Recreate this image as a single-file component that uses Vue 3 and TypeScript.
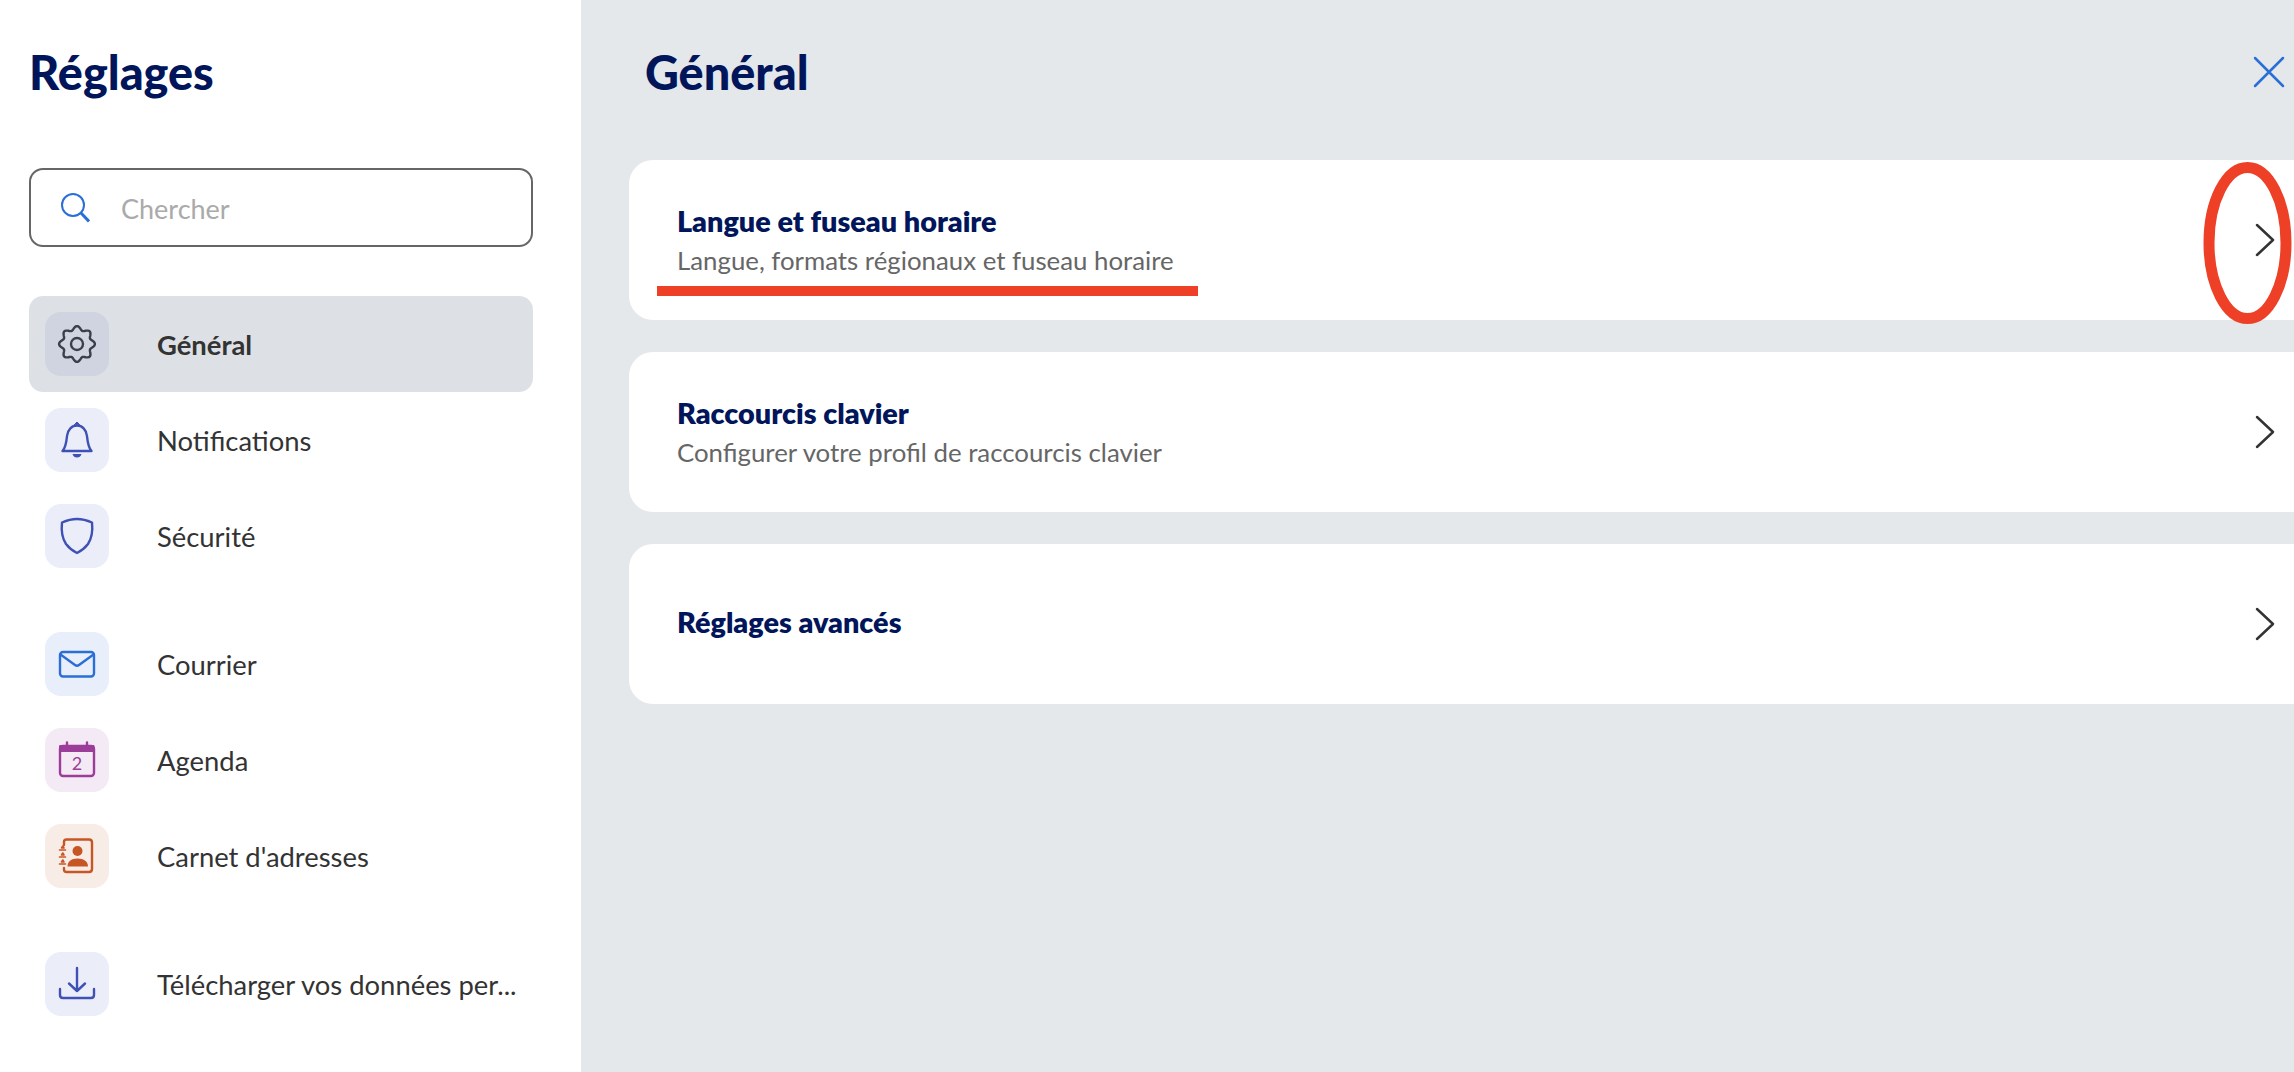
<script setup lang="ts">
interface NavItem {
  key: string;
  label: string;
  tone: string;
}

const groups: NavItem[][] = [
  [
    { key: 'gear', label: 'Général', tone: 'active' },
    { key: 'bell', label: 'Notifications', tone: 'indigo' },
    { key: 'shield', label: 'Sécurité', tone: 'indigo' }
  ],
  [
    { key: 'mail', label: 'Courrier', tone: 'blue' },
    { key: 'calendar', label: 'Agenda', tone: 'purple' },
    { key: 'contacts', label: "Carnet d'adresses", tone: 'orange' }
  ],
  [
    { key: 'download', label: 'Télécharger vos données per...', tone: 'indigo' }
  ]
]

const cards = [
  { title: 'Langue et fuseau horaire', sub: 'Langue, formats régionaux et fuseau horaire' },
  { title: 'Raccourcis clavier', sub: 'Configurer votre profil de raccourcis clavier' },
  { title: 'Réglages avancés', sub: '' }
]

// wavy gear outline, 8 lobes
const gearPath = Array.from({ length: 120 }, (_, i) => {
  const a = (i / 120) * Math.PI * 2
  const r = 16 + 1.9 * Math.cos(8 * a)
  return `${i === 0 ? 'M' : 'L'}${(20 + r * Math.sin(a)).toFixed(2)} ${(20 - r * Math.cos(a)).toFixed(2)}`
}).join(' ') + ' Z'
</script>

<template>
  <div class="page">
    <aside class="sidebar">
      <h1 class="side-title">Réglages</h1>
      <div class="search">
        <svg class="search-icon" width="30" height="30" viewBox="0 0 30 30" fill="none" stroke="currentColor">
          <circle cx="13" cy="12" r="11" stroke-width="2" />
          <path d="M21 20l8 8.5" stroke-width="3" />
        </svg>
        <span class="placeholder">Chercher</span>
      </div>
      <nav class="nav">
        <div v-for="(group, g) in groups" :key="g" class="nav-group">
          <div v-for="item in group" :key="item.key" class="nav-row" :class="{ selected: item.tone === 'active' }">
            <span class="tile" :class="item.tone">
              <svg width="40" height="40" viewBox="0 0 40 40" fill="none" stroke="currentColor" stroke-width="2.4" stroke-linejoin="round" stroke-linecap="round">
                <template v-if="item.key === 'gear'">
                  <path :d="gearPath" />
                  <circle cx="20" cy="20" r="6" />
                </template>
                <template v-else-if="item.key === 'bell'">
                  <path d="M5.5 31H34.5C31 27 30.6 22 30 16C29.4 9.5 25 5.5 20 5.5C15 5.5 10.6 9.5 10 16C9.4 22 9 27 5.5 31Z" />
                  <path d="M17.5 4.5L20 2L22.5 4.5Z" fill="currentColor" stroke-width="1" />
                  <path d="M15.5 34H24.5C24 36.5 22 37.5 20 37.5C18 37.5 16 36.5 15.5 34Z" fill="currentColor" stroke="none" />
                </template>
                <template v-else-if="item.key === 'shield'">
                  <path d="M20 3C25 3 30.5 4.5 35 6.5C36 16 35 22 31 28C28 32 24 35 20 37C16 35 12 32 9 28C5 22 4 16 5 6.5C9.5 4.5 15 3 20 3Z" />
                </template>
                <template v-else-if="item.key === 'mail'">
                  <rect x="3" y="8" width="34" height="24.5" rx="3" />
                  <path d="M3.5 10.5L18 21Q20 22.5 22 21L36.5 10.5" />
                </template>
                <template v-else-if="item.key === 'calendar'">
                  <rect x="3" y="6" width="34" height="30" rx="3" />
                  <path d="M3 5.5H37V11.5H3Z" fill="currentColor" stroke-width="1" />
                  <path d="M10 2.5V5M30 2.5V5" />
                  <text x="20" y="30" class="cal-day" text-anchor="middle" fill="currentColor" stroke="none">2</text>
                </template>
                <template v-else-if="item.key === 'contacts'">
                  <path d="M7 9V6Q7 3.5 9.5 3.5H32Q35 3.5 35 6.5V33Q35 36 32 36H9.5Q7 36 7 33.5V32" />
                  <path d="M4.5 12L5.8 10L7 12ZM2.5 14H8.5M4.5 19L5.8 17L7 19ZM2.5 21H8.5M4.5 26L5.8 24L7 26ZM2.5 28H8.5" stroke-width="1.6" fill="currentColor" />
                  <circle cx="20.5" cy="15" r="5" fill="currentColor" stroke="none" />
                  <path d="M10.5 30.5C10.5 25.5 14 22.5 20.5 22.5C27 22.5 31 25.5 31 30.5Z" fill="currentColor" stroke="none" />
                </template>
                <template v-else>
                  <path d="M20 4V27M12 19.5L20 27L28 19.5" />
                  <path d="M3 25V31Q3 34 6 34H34Q37 34 37 31V25" />
                </template>
              </svg>
            </span>
            <span class="nav-label">{{ item.label }}</span>
          </div>
        </div>
      </nav>
    </aside>

    <main class="content">
      <header class="content-head">
        <h1 class="content-title">Général</h1>
        <svg class="close" width="32" height="32" viewBox="0 0 32 32" fill="none" stroke="currentColor" stroke-width="2.5" stroke-linecap="round">
          <path d="M2 2L30 30M30 2L2 30" />
        </svg>
      </header>
      <div class="cards">
        <div v-for="card in cards" :key="card.title" class="card">
          <div class="card-text">
            <div class="card-title">{{ card.title }}</div>
            <div v-if="card.sub" class="card-sub">{{ card.sub }}</div>
          </div>
          <svg class="chevron" width="20" height="34" viewBox="0 0 20 34" fill="none" stroke="currentColor" stroke-width="2.5" stroke-linecap="round" stroke-linejoin="round">
            <path d="M2 2L18 17L2 32" />
          </svg>
        </div>
      </div>
    </main>

    <!-- red annotations drawn over the screenshot -->
    <div class="mark-line"></div>
    <svg class="mark-ring" width="90" height="164" viewBox="0 0 90 164" fill="none">
      <ellipse cx="44.5" cy="82" rx="38.5" ry="75.5" stroke="#ee4027" stroke-width="11" />
    </svg>
  </div>
</template>

<style>
html, body {
  margin: 0;
  background: #e4e8eb;
}
</style>

<style scoped>
.page {
  position: relative;
  display: flex;
  width: 2294px;
  height: 1072px;
  overflow: hidden;
  font-family: Lato, "Liberation Sans", sans-serif;
}

.sidebar {
  width: 581px;
  flex: none;
  box-sizing: border-box;
  padding: 40px 48px 0 29px;
  background: #fff;
}

.side-title,
.content-title {
  margin: 0;
  font-size: 46.8px;
  line-height: 64px;
  font-weight: 900;
  color: #00155a;
}

.search {
  display: flex;
  align-items: center;
  height: 79px;
  box-sizing: border-box;
  margin-top: 64px;
  padding-left: 29px;
  border: 2px solid #666;
  border-radius: 14px;
}

.search-icon {
  color: #2a6fd6;
  margin-right: 31px;
}

.placeholder {
  padding-top: 2px;
  font-size: 27px;
  color: #aaa;
}

.nav {
  margin-top: 49px;
}

.nav-group + .nav-group {
  margin-top: 32px;
}

.nav-row {
  display: flex;
  align-items: center;
  height: 96px;
  padding-left: 16px;
  border-radius: 14px;
  font-size: 27.4px;
  color: #333;
}

.nav-row.selected {
  background: #dde1e6;
  font-weight: 700;
}

.tile {
  display: flex;
  align-items: center;
  justify-content: center;
  width: 64px;
  height: 64px;
  flex: none;
  margin-right: 48px;
  border-radius: 16px;
}

.tile.active { background: #cfd4e0; color: #3a3f4c; }
.tile.indigo { background: #ebeef8; color: #3f51b5; }
.tile.blue { background: #e8eefa; color: #2a6fd6; }
.tile.purple { background: #f4eaf5; color: #9c3d9a; }
.tile.orange { background: #f8ece7; color: #c75625; }

.cal-day {
  font-size: 18px;
}

.nav-label {
  white-space: nowrap;
}

.content {
  flex: 1;
  min-width: 0;
  padding: 40px 0 0 48px;
}

.content-head {
  display: flex;
  align-items: center;
  justify-content: space-between;
  padding: 0 9px 0 16px;
}

.close {
  color: #2a6fd6;
}

.cards {
  display: flex;
  flex-direction: column;
  gap: 32px;
  margin-top: 56px;
}

.card {
  display: flex;
  align-items: center;
  justify-content: space-between;
  height: 160px;
  box-sizing: border-box;
  padding: 0 19px 0 48px;
  background: #fff;
  border-radius: 24px 0 0 24px;
}

.card-title {
  font-size: 28.8px;
  line-height: 38px;
  font-weight: 800;
  color: #00155a;
}

.card-title:only-child {
  margin-bottom: 5px;
}

.card-sub {
  padding-top: 2px;
  font-size: 25.8px;
  line-height: 36px;
  color: #666;
}

.chevron {
  color: #333;
}

.mark-line {
  position: absolute;
  left: 657px;
  top: 286px;
  width: 541px;
  height: 10px;
  background: #ee4027;
}

.mark-ring {
  position: absolute;
  left: 2203px;
  top: 161px;
}
</style>
